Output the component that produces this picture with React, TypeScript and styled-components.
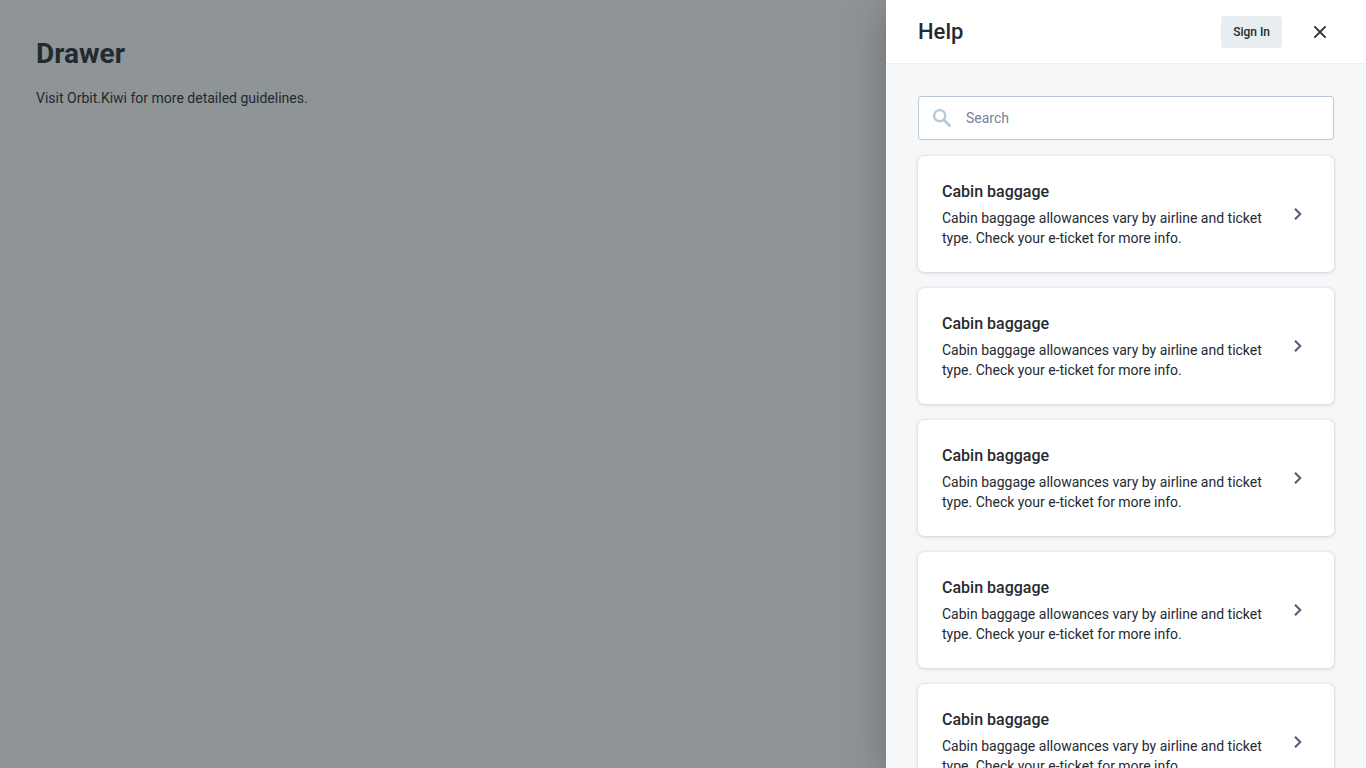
import React from 'react';
import styled, { createGlobalStyle } from 'styled-components';

const GlobalStyle = createGlobalStyle`
  *, *::before, *::after { box-sizing: border-box; }
  html, body { margin: 0; height: 100%; }
  body {
    overflow: hidden;
    background: #fff;
    color: #252a31;
    font-family: Roboto, "Liberation Sans", sans-serif;
    font-size: 14px;
    line-height: 20px;
  }
`;

const Page = styled.main`
  padding: 36px;
`;

const PageTitle = styled.h1`
  margin: 0 0 16px;
  font-size: 28px;
  line-height: 36px;
  font-weight: 700;
`;

const PageText = styled.p`
  margin: 0;
`;

const Overlay = styled.div`
  position: fixed;
  inset: 0;
  display: flex;
  justify-content: flex-end;
  background: rgba(31, 41, 45, 0.5);
`;

const Panel = styled.aside`
  display: flex;
  flex-direction: column;
  width: 100%;
  max-width: 480px;
  height: 100%;
  overflow-y: auto;
  scrollbar-width: none;
  background: #f5f7f9;
  box-shadow: 0 8px 40px 0 rgba(43, 36, 40, 0.34);
`;

const PanelHeader = styled.header`
  display: flex;
  flex: none;
  align-items: center;
  height: 64px;
  padding: 0 24px 0 32px;
  background: #fff;
  border-bottom: 1px solid #eceef0;
`;

const PanelTitle = styled.h2`
  flex: 1;
  margin: 0;
  font-size: 22px;
  line-height: 28px;
  font-weight: 500;
`;

const SignInButton = styled.button`
  height: 32px;
  margin-right: 16px;
  padding: 0 12px;
  border: 0;
  border-radius: 3px;
  background: #e8edf1;
  color: #252a31;
  font: 500 12px/16px Roboto, "Liberation Sans", sans-serif;
  cursor: pointer;
`;

const CloseButton = styled.button`
  display: flex;
  align-items: center;
  justify-content: center;
  width: 44px;
  height: 44px;
  padding: 0;
  border: 0;
  background: transparent;
  color: #252a31;
  cursor: pointer;
`;

const PanelBody = styled.div`
  display: flex;
  flex-direction: column;
  flex: none;
  gap: 16px;
  padding: 32px;
`;

const SearchField = styled.label`
  display: flex;
  flex: none;
  align-items: center;
  height: 44px;
  padding: 0 12px 0 11px;
  border: 1px solid #b9c7d6;
  border-radius: 3px;
  background: #fff;
  color: #bac7d5;
`;

const SearchInput = styled.input`
  flex: 1;
  min-width: 0;
  height: 100%;
  padding: 0 0 0 12px;
  border: 0;
  outline: 0;
  background: transparent;
  color: #252a31;
  font: 400 14px/20px Roboto, "Liberation Sans", sans-serif;

  &::placeholder {
    color: #6f83a0;
    opacity: 1;
  }
`;

const Card = styled.a`
  display: flex;
  flex: none;
  align-items: center;
  gap: 16px;
  padding: 24px;
  border-radius: 6px;
  background: #fff;
  color: #252a31;
  text-decoration: none;
  box-shadow: 0 0 2px 0 rgba(37, 42, 49, 0.16), 0 1px 4px 0 rgba(37, 42, 49, 0.12);
`;

const CardContent = styled.div`
  flex: 1;
  min-width: 0;
`;

const CardTitle = styled.h3`
  margin: 0 0 4px;
  font-size: 16px;
  line-height: 24px;
  font-weight: 500;
`;

const CardText = styled.p`
  margin: 0;
`;

const Icon = styled.svg`
  display: block;
  flex: none;
  fill: none;
  stroke: currentColor;
`;

const ChevronIcon = styled(Icon)`
  color: #4f5e71;
`;

const cards = Array.from({ length: 6 }, (_, id) => ({
  id,
  title: 'Cabin baggage',
  text: 'Cabin baggage allowances vary by airline and ticket type. Check your e-ticket for more info.',
}));

export default function App() {
  return (
    <>
      <GlobalStyle />
      <Page>
        <PageTitle>Drawer</PageTitle>
        <PageText>Visit Orbit.Kiwi for more detailed guidelines.</PageText>
      </Page>
      <Overlay>
        <Panel role="dialog" aria-labelledby="drawer-title">
          <PanelHeader>
            <PanelTitle id="drawer-title">Help</PanelTitle>
            <SignInButton type="button">Sign In</SignInButton>
            <CloseButton type="button" aria-label="Close">
              <Icon width="24" height="24" viewBox="0 0 24 24" strokeWidth="1.8" aria-hidden="true">
                <path d="M6.4 6.4l11.2 11.2M17.6 6.4L6.4 17.6" />
              </Icon>
            </CloseButton>
          </PanelHeader>
          <PanelBody>
            <SearchField>
              <Icon width="24" height="24" viewBox="0 0 24 24" aria-hidden="true">
                <circle cx="9.7" cy="9.7" r="5.6" strokeWidth="2.4" />
                <path d="M14 14l5.5 5.5" strokeWidth="2.9" strokeLinecap="round" />
              </Icon>
              <SearchInput type="text" placeholder="Search" aria-label="Search" />
            </SearchField>
            {cards.map((card) => (
              <Card href="#" key={card.id}>
                <CardContent>
                  <CardTitle>{card.title}</CardTitle>
                  <CardText>{card.text}</CardText>
                </CardContent>
                <ChevronIcon width="24" height="24" viewBox="0 0 24 24" strokeWidth="2" aria-hidden="true">
                  <path d="M9 6.7l5.3 5.3L9 17.3" />
                </ChevronIcon>
              </Card>
            ))}
          </PanelBody>
        </Panel>
      </Overlay>
    </>
  );
}
